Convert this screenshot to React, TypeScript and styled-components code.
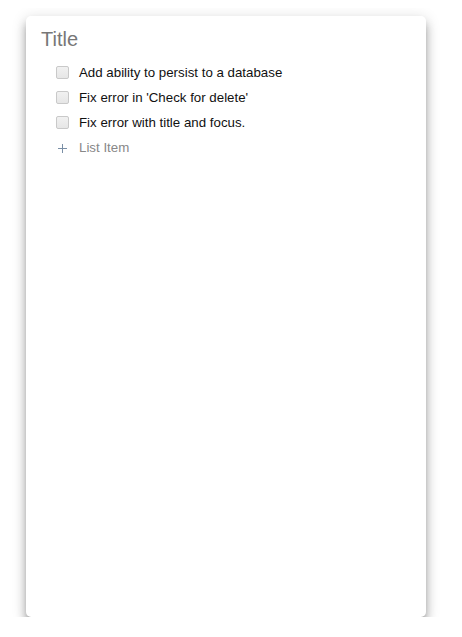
import styled, { createGlobalStyle } from "styled-components";

const GlobalStyle = createGlobalStyle`
  body {
    margin: 8px;
    background: #fff;
    font-family: "Liberation Sans", Arial, sans-serif;
  }
`;

const items = [
  "Add ability to persist to a database",
  "Fix error in 'Check for delete'",
  "Fix error with title and focus.",
];

export default function App() {
  return (
    <>
      <GlobalStyle />
      <Card>
        <Title>Title</Title>
        <List>
          {items.map((text) => (
            <Row key={text}>
              <Check />
              <ItemText>{text}</ItemText>
            </Row>
          ))}
          <Row>
            <Plus>
              <svg width="9" height="9" viewBox="0 0 9 9">
                <path d="M4.5 0v9M0 4.5h9" stroke="#7a8fa6" strokeWidth="1" />
              </svg>
            </Plus>
            <ItemText $placeholder>List Item</ItemText>
          </Row>
        </List>
      </Card>
    </>
  );
}

const Card = styled.div`
  width: 400px;
  height: 601px;
  margin: 8px 0 0 18px;
  background: #fff;
  border-radius: 5px;
  box-shadow: 0 8px 10px 1px rgba(0, 0, 0, 0.2),
    0 3px 14px 2px rgba(0, 0, 0, 0.12), 0 6px 6px -3px rgba(0, 0, 0, 0.25);
  box-sizing: border-box;
  padding: 11px 15px;
`;

const Title = styled.div`
  font-size: 20px;
  line-height: 24px;
  color: #777;
`;

const List = styled.div`
  display: flex;
  flex-direction: column;
  padding: 9px 0 0 15px;
`;

const Row = styled.div`
  display: flex;
  align-items: center;
  height: 25px;
`;

const Check = styled.span`
  width: 11px;
  height: 11px;
  border: 1px solid #c9c9c9;
  border-radius: 2px;
  background: linear-gradient(#f1f1f1, #e6e6e6);
  margin-right: 10px;
`;

const Plus = styled.span`
  display: flex;
  width: 13px;
  margin-right: 10px;
  justify-content: center;
  padding-top: 2px;
`;

const ItemText = styled.span<{ $placeholder?: boolean }>`
  font-size: 13.3px;
  color: ${({ $placeholder }) => ($placeholder ? "#888" : "#111")};
`;
